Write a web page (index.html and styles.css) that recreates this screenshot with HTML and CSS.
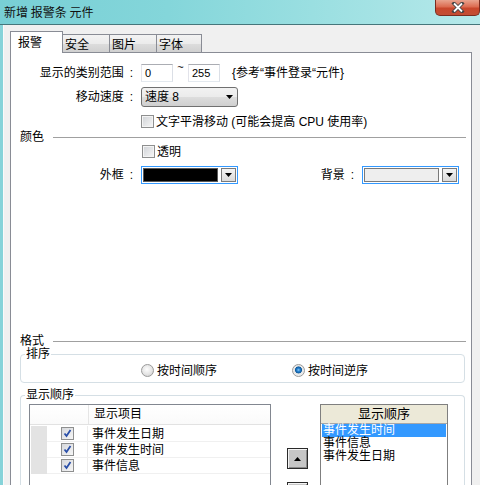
FILE: index.html
```html
<!DOCTYPE html>
<html>
<head>
<meta charset="utf-8">
<link rel="stylesheet" href="styles.css">
</head>
<body>
<div class="titlebar">
  <span class="title">新增 报警条 元件</span>
  <div class="close"><svg width="16" height="11" viewBox="0 0 16 11"><path d="M4 1.5 L12 9.5 M12 1.5 L4 9.5" stroke="#444" stroke-width="3.6" stroke-linecap="square"/><path d="M4 1.5 L12 9.5 M12 1.5 L4 9.5" stroke="#fff" stroke-width="1.8"/></svg></div>
</div>
<div class="window">
  <div class="tabs">
    <div class="tab active">报警</div>
    <div class="tab t1">安全</div>
    <div class="tab t2">图片</div>
    <div class="tab t3">字体</div>
  </div>
  <div class="panel">
    <div class="row r1">
      <span class="lbl">显示的类别范围<span class="colon">:</span></span>
      <div class="input">0</div>
      <span class="tilde">~</span>
      <div class="input">255</div>
      <span class="note">{参考“事件登录“元件}</span>
    </div>
    <div class="row r2">
      <span class="lbl">移动速度<span class="colon">:</span></span>
      <div class="select"><span>速度 8</span><svg width="7" height="4" viewBox="0 0 7 4"><path d="M0 0H7L3.5 4Z" fill="#000"/></svg></div>
    </div>
    <div class="row r3">
      <span class="cb"></span><span class="cbtext">文字平滑移动 (可能会提高 CPU 使用率)</span>
    </div>
    <div class="sec s1">颜色</div>
    <div class="row r4">
      <span class="cb"></span><span class="cbtext">透明</span>
    </div>
    <div class="row r5">
      <span class="lbl">外框<span class="colon">:</span></span>
      <div class="cdrop"><span class="swatch black"></span><span class="abtn"><svg width="7" height="4" viewBox="0 0 7 4"><path d="M0 0H7L3.5 4Z" fill="#000"/></svg></span></div>
      <span class="lbl lbl2">背景<span class="colon">:</span></span>
      <div class="cdrop"><span class="swatch light"></span><span class="abtn"><svg width="7" height="4" viewBox="0 0 7 4"><path d="M0 0H7L3.5 4Z" fill="#000"/></svg></span></div>
    </div>
    <div class="sec s2">格式</div>
    <div class="group g1">
      <span class="legend">排序</span>
      <div class="radios">
        <div class="ritem"><span class="radio"></span><span class="rtext">按时间顺序</span></div>
        <div class="ritem"><span class="radio on"></span><span class="rtext">按时间逆序</span></div>
      </div>
    </div>
    <div class="group g2">
      <span class="legend">显示顺序</span>
      <div class="order">
        <div class="tbl">
          <div class="thead"><span class="hc0"></span><span class="hc1">显示项目</span></div>
          <div class="tbody">
            <div class="rhcol"></div>
            <div class="rows">
              <div class="trow"><span class="ccb"><span class="chk"><svg width="9" height="9" viewBox="0 0 9 9"><path d="M1.5 4.5 L3.5 7 L7.5 1" stroke="#2a4fa8" stroke-width="1.8" fill="none"/></svg></span></span><span class="ctx">事件发生日期</span></div>
              <div class="trow"><span class="ccb"><span class="chk"><svg width="9" height="9" viewBox="0 0 9 9"><path d="M1.5 4.5 L3.5 7 L7.5 1" stroke="#2a4fa8" stroke-width="1.8" fill="none"/></svg></span></span><span class="ctx">事件发生时间</span></div>
              <div class="trow"><span class="ccb"><span class="chk"><svg width="9" height="9" viewBox="0 0 9 9"><path d="M1.5 4.5 L3.5 7 L7.5 1" stroke="#2a4fa8" stroke-width="1.8" fill="none"/></svg></span></span><span class="ctx">事件信息</span></div>
            </div>
          </div>
        </div>
        <div class="btns">
          <div class="btn"><svg width="7" height="4" viewBox="0 0 7 4"><path d="M0 4H7L3.5 0Z" fill="#000"/></svg></div>
          <div class="btn"><svg width="7" height="4" viewBox="0 0 7 4"><path d="M0 0H7L3.5 4Z" fill="#000"/></svg></div>
        </div>
        <div class="list">
          <div class="lhead">显示顺序</div>
          <div class="litem sel">事件发生时间</div>
          <div class="litem">事件信息</div>
          <div class="litem">事件发生日期</div>
        </div>
      </div>
    </div>
  </div>
</div>
</body>
</html>
```
FILE: styles.css
```css
* { box-sizing: border-box; }
html, body { overflow: hidden; }
body {
  margin: 0;
  width: 480px;
  height: 485px;
  background: #f0f0f0;
  font-family: "Liberation Sans", "Noto Sans CJK SC", sans-serif;
  font-size: 12px;
  line-height: 12px;
  color: #000;
}
.titlebar {
  height: 25px;
  border-bottom: 1px solid #46767b;
  background: linear-gradient(to right, #78cfd5 0%, #84d6da 35%, #9adfe1 65%, #b6e9ea 100%);
  display: flex;
  justify-content: space-between;
  align-items: flex-start;
}
.title {
  padding: 6px 0 0 4px;
  font-family: "Noto Sans CJK SC", sans-serif;
  font-size: 12px;
  line-height: 12px;
  color: #111;
}
.close {
  width: 45px;
  height: 16px;
  border: 1px solid #7a2c1f;
  border-top: none;
  border-radius: 0 0 5px 5px;
  background: linear-gradient(#e9a48f 0%, #dc6c51 45%, #c9472c 55%, #c24e34 100%);
  display: flex;
  align-items: center;
  justify-content: center;
}
.window {
  border-left: 3px solid #86d3d9;
  box-shadow: inset 1px 0 #fafafa;
  padding: 6px 8px 0 7px;
  height: 460px;
  overflow: hidden;
}
.tabs {
  display: flex;
  align-items: flex-end;
  height: 21px;
}
.tab {
  height: 18px;
  border: 1px solid #898c95;
  border-bottom: none;
  margin-left: -1px;
  padding: 3px 0 0 2px;
  background: linear-gradient(#f3f3f3 0%, #ebebeb 50%, #dddddd 51%, #d0d0d0 100%);
  font-family: "Noto Sans CJK SC", sans-serif;
}
.tab.active {
  margin-left: 0;
  height: 22px;
  margin-bottom: -1px;
  width: 53px;
  padding: 4px 0 0 7px;
  background: #fff;
  position: relative;
  z-index: 1;
}
.tab.t1 { width: 48px; }
.tab.t2 { width: 48px; }
.tab.t3 { width: 46px; }
.panel {
  border: 1px solid #898c95;
  border-bottom: none;
  background: #fff;
  height: 433px;
  padding-top: 11px;
  overflow: hidden;
}
.row { display: flex; align-items: center; }
.lbl {
  width: 130px;
  padding-right: 8px;
  text-align: right;
  white-space: nowrap;
}
.colon { margin-left: 6px; }
.r1 { height: 18px; }
.input {
  width: 32px;
  height: 18px;
  border: 1px solid #abadb3;
  border-color: #abadb3 #dbdfe6 #e3e9ef #e2e3ea;
  padding-left: 3px;
  font-size: 11px;
  line-height: 16px;
}
.tilde {
  width: 15px;
  text-align: center;
  align-self: flex-start;
  margin-top: -3px;
  font-size: 11px;
}
.note { margin-left: 12px; white-space: nowrap; }
.r2 { margin-top: 5px; height: 20px; }
.select {
  width: 97px;
  height: 20px;
  border: 1px solid #707070;
  border-radius: 3px;
  background: linear-gradient(#f2f2f2 0%, #ebebeb 50%, #dddddd 51%, #cfcfcf 100%);
  display: flex;
  align-items: center;
  justify-content: space-between;
  padding: 0 4px 0 3px;
  font-size: 12px;
}
.r3 { margin-top: 8px; height: 13px; padding-left: 130px; }
.r4 { margin-top: 2px; height: 13px; padding-left: 131px; }
.cb {
  width: 13px;
  height: 13px;
  border: 1px solid #8e8f8f;
  background: linear-gradient(135deg, #cfd2d6 0%, #f7f7f7 100%);
  box-shadow: inset 0 0 0 1px #f4f4f4;
}
.cbtext { margin-left: 2px; white-space: nowrap; }
.sec {
  display: flex;
  align-items: center;
  height: 12px;
  margin: 0 5px 0 9px;
}
.sec::after {
  content: "";
  flex: 1;
  border-top: 1px solid #a0a0a0;
  margin-left: 9px;
}
.s1 { margin-top: 3px; }
.s2 { margin-top: 151px; }
.r5 { margin-top: 8px; height: 18px; }
.cdrop {
  width: 97px;
  height: 18px;
  border: 1px solid #3399ff;
  padding: 1px;
  display: flex;
}
.swatch { width: 75px; height: 14px; border: 1px solid #5a5a5a; }
.swatch.black { background: #000; }
.swatch.light { background: #eeeeee; border-color: #7a7a7a; }
.abtn {
  width: 15px;
  height: 14px;
  margin-left: 3px;
  border: 1px solid #7a7a7a;
  background: linear-gradient(#f4f4f4, #dadada);
  display: flex;
  align-items: center;
  justify-content: center;
}
.lbl2 { width: 124px; }
.group {
  position: relative;
  margin: 7px 6px 0 9px;
  border: 1px solid #d5dfe5;
  border-radius: 4px;
}
.legend {
  position: absolute;
  top: -7px;
  left: 4px;
  padding: 0 1px;
  background: #fff;
}
.g1 { padding: 9px 0 5px 0; }
.radios { display: flex; height: 13px; align-items: center; padding-left: 120px; }
.ritem { display: flex; align-items: center; width: 151px; }
.radio {
  width: 13px;
  height: 13px;
  border-radius: 50%;
  border: 1px solid #9a9a9a;
  background: radial-gradient(circle at 45% 40%, #fdfdfd 0%, #e4e4e4 55%, #c8c8c8 100%);
}
.radio.on {
  background: radial-gradient(circle at 50% 45%, #8fd0f6 0px, #2a83d2 1.5px, #0d5a9c 3.2px, #e6e6e6 3.8px, #f5f5f5 100%);
}
.rtext { margin-left: 3px; white-space: nowrap; }
.g2 {
  margin-top: 12px;
  padding: 8px 0 0 8px;
  height: 90px;
  border-bottom: none;
  border-radius: 4px 4px 0 0;
}
.order { display: flex; align-items: flex-start; }
.tbl {
  width: 242px;
  height: 81px;
  border: 1px solid #828790;
  border-bottom: none;
  background: #fff;
}
.thead {
  height: 20px;
  display: flex;
  border-bottom: 1px solid #e2e2e2;
  background: linear-gradient(#ffffff, #fafafa);
}
.hc0 { width: 59px; border-right: 1px solid #e5e5e5; }
.hc1 { padding: 3px 0 0 5px; }
.tbody { display: flex; margin-top: 1px; }
.rhcol { width: 16px; height: 48px; margin-left: 1px; background: #e3e3e3; }
.rows { flex: 1; }
.trow { display: flex; height: 16px; border-bottom: 1px solid #f0f0f0; }
.ccb {
  width: 41px;
  border-right: 1px solid #ececec;
  display: flex;
  align-items: center;
  justify-content: center;
  padding-left: 1px;
}
.chk {
  width: 13px;
  height: 13px;
  border: 1px solid #8e8f8f;
  background: linear-gradient(135deg, #d6d8dc, #f6f6f6);
  display: flex;
  align-items: center;
  justify-content: center;
}
.ctx { padding: 2px 0 0 4px; white-space: nowrap; }
.btns {
  width: 21px;
  height: 37px;
  overflow: hidden;
  margin: 44px 0 0 16px;
  display: flex;
  flex-direction: column;
  gap: 13px;
}
.btn {
  flex: none;
  width: 21px;
  height: 21px;
  border: 1px solid #2a2a2a;
  background: #c6c6c6;
  box-shadow: inset 1px 1px #f4f4f4, inset -1px -1px #8a8a8a;
  display: flex;
  align-items: center;
  justify-content: center;
}
.list {
  width: 128px;
  height: 81px;
  margin-left: 12px;
  border: 1px solid #7f7f7f;
  border-bottom: none;
  background: #fff;
}
.lhead {
  height: 19px;
  background: #ece9d8;
  border-bottom: 1px solid #a7a7a7;
  text-align: center;
  padding-top: 3px;
  font-size: 13px;
}
.litem {
  height: 13px;
  line-height: 13px;
  margin: 0 1px;
  padding-left: 1px;
  font-size: 12px;
  white-space: nowrap;
}
.litem.sel { background: #3399ff; color: #fff; }
```
